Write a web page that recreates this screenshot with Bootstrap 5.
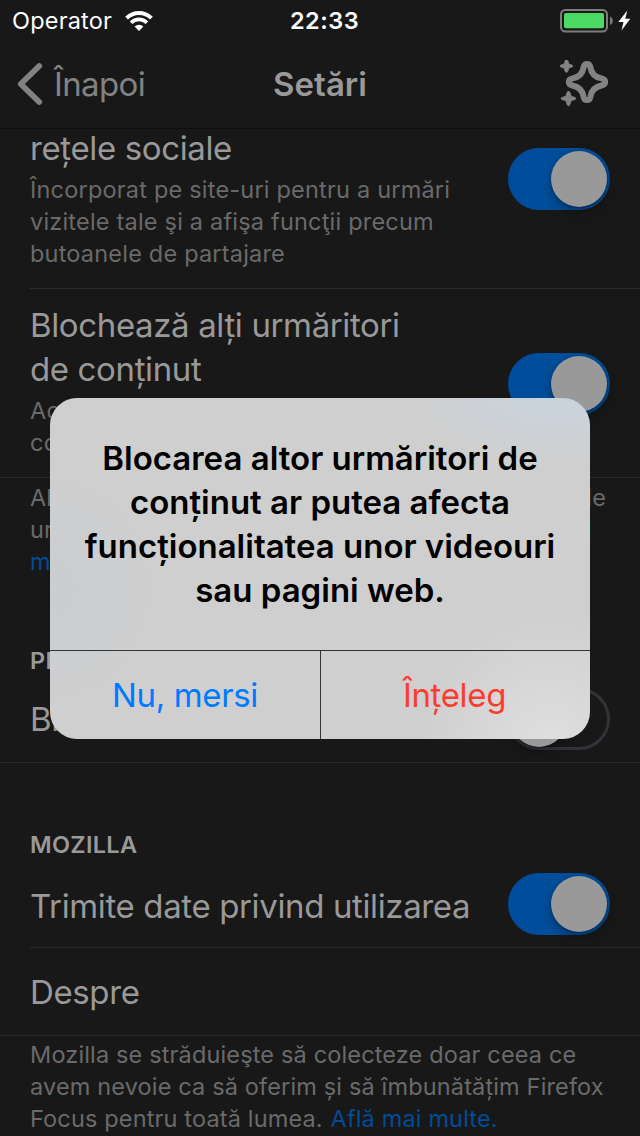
<!DOCTYPE html>
<html lang="ro">
<head>
<meta charset="utf-8">
<meta name="viewport" content="width=device-width, initial-scale=1">
<title>Setări</title>
<link href="https://cdn.jsdelivr.net/npm/bootstrap@5.3.0/dist/css/bootstrap.min.css" rel="stylesheet">
<style>
  body { background: #181818; font-family: Inter, "Liberation Sans", sans-serif; font-feature-settings: "locl" 0; color: #999; width: 640px; height: 1136px; overflow: hidden; position: relative; }
  .status-bar { height: 40px; font-size: 23.5px; line-height: 40px; color: #fff; padding: 1px 8px 0 12px; letter-spacing: .2px; }
  .clock { letter-spacing: .5px; margin-left: 5px; }
  .title-bar { height: 89px; border-bottom: 1px solid #0e0e0e; padding: 0 31px; font-size: 33px; line-height: 44px; }
  .chevron { margin-left: -14px; }
  .back-label { color: #828282; letter-spacing: -.65px; margin-left: 11px; }
  .side { flex: 1 1 0; }
  .line { display: block; white-space: nowrap; }
  .settings { margin-top: -3px; }
  .setting { padding-left: 30px; }
  .setting-body { padding-right: 30px; border-bottom: 1px solid #2b2b2b; }
  .full-line { border-bottom: 1px solid #2b2b2b; }
  .full-line .setting-body { border-bottom: 0; }
  .setting-title { font-size: 33px; line-height: 44px; letter-spacing: -.37px; }
  .note { font-size: 23.5px; line-height: 32px; color: #6a6a6a; letter-spacing: .2px; }
  .page-note { padding: 3px 34px 0 30px; letter-spacing: .15px; }
  .section-title { font-size: 23.5px; line-height: 32px; font-weight: 600; padding: 1px 0 0 30px; margin-bottom: -1px; letter-spacing: .3px; }
  .note a { color: #004c97; text-decoration: none; }
  .h-first { height: 163px; } .h-second { height: 188px; } .h-single { height: 88px; }
  .h-single .setting-title { padding-top: 1px; }
  .full-line .h-single { height: 87px; }
  .gap-one { height: 166px; padding-top: 4px; } .gap-two { height: 65px; }
  .toggle { width: 102px; height: 62px; border-radius: 31px; background: #004e9b; padding: 3px; flex: none; display: flex; justify-content: flex-end; }
  .toggle::after { content: ""; width: 56px; height: 56px; border-radius: 50%; background: #999; box-shadow: 0 5px 12px rgba(0,0,0,.3), 0 1px 2px rgba(0,0,0,.3); }
  .toggle.off { background: transparent; border: 3px solid #303439; padding: 0; justify-content: flex-start; }
  .alert-box { position: absolute; left: 50px; top: 398px; width: 540px; height: 341px; border-radius: 27px; overflow: hidden; color: #000;
    background: radial-gradient(circle 130px at 500px 345px, #dfdfdf, rgba(223,223,223,0)), radial-gradient(ellipse 150px 75px at 510px -8px, #c8d4df, rgba(200,212,223,0)), radial-gradient(ellipse 110px 120px at 0 190px, #cacdd1, rgba(202,205,209,0)), #cfcfcf; }
  .alert-text { height: 252px; padding-top: 38px; font-size: 33px; line-height: 44px; font-weight: 600; letter-spacing: -.01px; }
  .alert-actions { height: 89px; border-top: 1px solid #33343a; font-size: 33px; letter-spacing: -.36px; }
  .alert-actions button { border: 0; background: none; padding: 2px 0 0; letter-spacing: inherit; color: #007aff; width: 50%; }
  .alert-actions button + button { border-left: 1px solid #33343a; color: #ff3b30; padding-right: 2px; }
</style>
</head>
<body>
<header>
  <div class="status-bar d-flex align-items-center">
    <div class="side d-flex align-items-center">
      <span>Operator</span>
      <svg width="28" height="20" viewBox="0 0 28 20" style="margin-left:13px" fill="none" stroke="#fff">
        <path d="M1.600 7.200a17.600 17.600 0 0 1 24.800 0" stroke-width="4"/>
        <path d="M6.100 11.700a11.200 11.200 0 0 1 15.800 0" stroke-width="3.700"/>
        <path d="M14 19.900l-4.400-4.400a6.300 6.300 0 0 1 8.800 0z" fill="#fff" stroke="none"/>
      </svg>
    </div>
    <span class="clock fw-semibold">22:33</span>
    <div class="side d-flex align-items-center justify-content-end">
      <svg width="72" height="24" viewBox="0 0 72 24">
        <rect x="1" y="1" width="46" height="21.500" rx="4.500" fill="none" stroke="#7d7d7d" stroke-width="2"/>
        <rect x="4" y="4" width="40" height="15.200" rx="2" fill="#4cd964"/>
        <path d="M50 7.500c3.700 2 3.700 6.600 0 8.600z" fill="#7d7d7d"/>
        <path d="M67.300 1.500l-9 11.500h5.200l-2 8.500 8.800-11.800h-5z" fill="#fff"/>
      </svg>
    </div>
  </div>
  <div class="title-bar d-flex align-items-center">
    <div class="side d-flex align-items-center">
      <svg class="chevron" width="26" height="44" viewBox="0 0 26 44" fill="none" stroke="#828282" stroke-width="5.800" stroke-linecap="round" stroke-linejoin="round">
        <path d="M22.200 4L3.800 22l18.400 18"/>
      </svg>
      <span class="back-label">Înapoi</span>
    </div>
    <span class="fw-semibold">Setări</span>
    <div class="side d-flex justify-content-end">
      <svg width="49" height="48" viewBox="560 60 49 48" fill="#828282">
        <path d="M583.600 67.200Q584.200 63.900 587 63.900T590.400 67.200Q591.800 76.500 601.500 78.400Q605.200 79.200 605.200 82T601.500 85.500Q591.800 87.500 590.400 96.700Q589.800 100.100 587 100.100T583.600 96.700Q582.200 87.500 572.500 85.500Q568.800 84.700 568.800 82T572.500 78.400Q582.200 76.500 583.600 67.200Z" fill="none" stroke="#828282" stroke-width="6" stroke-linejoin="round"/>
        <path stroke="#828282" stroke-width=".8" d="M565 61q1.500-3 3 0l.9 3.100 3 .9q2.200 1 0 2.100l-3 .9-.9 3.200q-1.500 2.600-3 0l-.9-3.200-3.200-.9q-2.200-1 0-2.100l3.200-.9z"/>
        <path stroke="#828282" stroke-width=".8" d="M567 92.500q1.500-3 3 0l1.100 3.700 3.800 1.200q2.400 1.100 0 2.200l-3.800 1.200-1.100 3.800q-1.500 2.600-3 0l-1.100-3.800-3.900-1.200q-2.400-1.100 0-2.200l3.900-1.200z"/>
      </svg>
    </div>
  </div>
</header>

<main class="settings">
  <div class="setting">
    <div class="setting-body h-first d-flex justify-content-between align-items-start">
      <div>
        <div class="setting-title">rețele sociale</div>
        <div class="note pt-1">
          <span class="line">Încorporat pe site-uri pentru a urmări</span>
          <span class="line">vizitele tale şi a afişa funcţii precum</span>
          <span class="line">butoanele de partajare</span>
        </div>
      </div>
      <div class="toggle" style="margin-top:22px"></div>
    </div>
  </div>
  <div class="setting full-line">
    <div class="setting-body h-second d-flex justify-content-between align-items-start">
      <div style="padding-top:14px">
        <div class="setting-title">
          <span class="line">Blochează alți urmăritori</span>
          <span class="line">de conținut</span>
        </div>
        <div class="note" style="padding-top:4px">
          <span class="line">Activ</span>
          <span class="line">cont</span>
        </div>
      </div>
      <div class="toggle" style="margin-top:64px"></div>
    </div>
  </div>
  <div class="page-note note gap-one">
    <span class="line d-flex justify-content-between"><span>Alege</span><span>le</span></span>
    <span class="line d-flex justify-content-between"><span>urmă</span><a href="#" style="margin-right:14px">ai</a></span>
    <span class="line"><a href="#">mult</a></span>
  </div>
  <div class="section-title">PERF</div>
  <div class="setting full-line" style="margin-top:-2px">
    <div class="setting-body h-single d-flex justify-content-between align-items-center">
      <div class="setting-title">Bloch</div>
      <div class="toggle off"></div>
    </div>
  </div>
  <div class="gap-two"></div>
  <div class="section-title">MOZILLA</div>
  <div class="setting">
    <div class="setting-body h-single d-flex justify-content-between align-items-center">
      <div class="setting-title pt-1">Trimite date privind utilizarea</div>
      <div class="toggle"></div>
    </div>
  </div>
  <div class="setting full-line">
    <div class="setting-body h-single d-flex align-items-center">
      <div class="setting-title pt-0">Despre</div>
    </div>
  </div>
  <div class="page-note note">
    <span class="line">Mozilla se străduieşte să colecteze doar ceea ce</span>
    <span class="line">avem nevoie ca să oferim și să îmbunătățim Firefox</span>
    <span class="line">Focus pentru toată lumea. <a href="#" style="margin-left:1px">Află mai multe.</a></span>
  </div>
</main>

<div class="alert-box" role="alertdialog">
  <div class="alert-text text-center">
    <span class="line">Blocarea altor urmăritori de</span>
    <span class="line">conținut ar putea afecta</span>
    <span class="line">funcționalitatea unor videouri</span>
    <span class="line">sau pagini web.</span>
  </div>
  <div class="alert-actions d-flex">
    <button type="button">Nu, mersi</button>
    <button type="button">Înțeleg</button>
  </div>
</div>
<script src="https://cdn.jsdelivr.net/npm/bootstrap@5.3.0/dist/js/bootstrap.bundle.min.js"></script>
</body>
</html>
